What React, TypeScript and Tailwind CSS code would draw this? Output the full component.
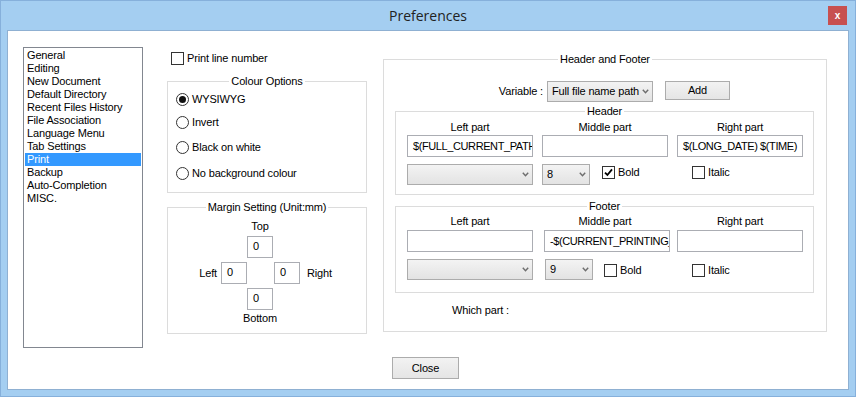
import React from "react";

function Chevron() {
  return (
    <svg width="7" height="5" viewBox="0 0 7 5" className="shrink-0">
      <path d="M0.8 0.8 L3.5 3.8 L6.2 0.8" fill="none" stroke="#6d6d6d" strokeWidth="1.4" />
    </svg>
  );
}

function Select({ className, text }: { className: string; text?: string }) {
  return (
    <div
      className={
        "flex items-center justify-between border border-[#acacac] bg-linear-to-b from-[#f3f3f3] to-[#e3e3e3] pl-[4px] pr-[3px] " +
        className
      }
    >
      <span className="whitespace-nowrap leading-[13px]">{text}</span>
      <Chevron />
    </div>
  );
}

function Check({ checked }: { checked?: boolean }) {
  return (
    <div className="w-[13px] h-[13px] border border-[#333333] bg-white flex items-center justify-center shrink-0">
      {checked && (
        <svg width="9" height="9" viewBox="0 0 9 9">
          <path d="M1 4.6 L3.4 7 L8 1.4" fill="none" stroke="#000" strokeWidth="1.8" />
        </svg>
      )}
    </div>
  );
}

function Radio({ checked }: { checked?: boolean }) {
  return (
    <div className="w-[13px] h-[13px] rounded-full border border-[#333333] bg-white flex items-center justify-center shrink-0">
      {checked && <div className="w-[7px] h-[7px] rounded-full bg-[#111]" />}
    </div>
  );
}

function Input({ className, text }: { className: string; text?: string }) {
  return (
    <div
      className={
        "border border-[#abadb3] bg-white overflow-hidden whitespace-nowrap pl-[5px] tracking-[-0.4px] " +
        className
      }
    >
      {text}
    </div>
  );
}

const items = [
  "General",
  "Editing",
  "New Document",
  "Default Directory",
  "Recent Files History",
  "File Association",
  "Language Menu",
  "Tab Settings",
  "Print",
  "Backup",
  "Auto-Completion",
  "MISC.",
];

export default function App() {
  return (
    <div className="w-[856px] h-[397px] bg-[#a4cef1] border border-[#86b0db] flex flex-col font-['Liberation_Sans',Arial,sans-serif] text-[11px] text-black tracking-[-0.15px]">
      {/* Title bar */}
      <div className="h-[29px] grid grid-cols-[1fr_auto_1fr] shrink-0">
        <div />
        <div className="font-['Open_Sans',sans-serif] text-[14px] leading-[29px] text-[#222] tracking-normal">
          Preferences
        </div>
        <div className="flex justify-end items-start">
          <div className="mt-[5px] mr-[8px] w-[19px] h-[19px] bg-[#c75050] flex items-center justify-center text-white font-bold text-[10px] leading-none">
            x
          </div>
        </div>
      </div>

      {/* Content */}
      <div className="mx-[6px] h-[360px] border border-[#8fb0d2] bg-white flex flex-col shrink-0">
        <div className="flex items-start pl-[15px] pt-[16px]">
          {/* Listbox */}
          <div className="w-[120px] h-[301px] border border-[#828790] p-[1px] shrink-0">
            {items.map((it) => (
              <div
                key={it}
                className={
                  it === "Print"
                    ? "h-[13px] leading-[13px] pl-[2px] bg-[#3399ff] text-white whitespace-nowrap"
                    : "h-[13px] leading-[13px] pl-[2px] whitespace-nowrap"
                }
              >
                {it}
              </div>
            ))}
          </div>

          {/* Middle column */}
          <div className="ml-[24px] w-[200px] flex flex-col shrink-0">
            <div className="mt-[5px] h-[13px] flex items-center gap-[3px] pl-[4px]">
              <Check />
              <span className="leading-[13px]">Print line number</span>
            </div>

            <fieldset className="mt-[10px] h-[118px] border border-[#dcdcdc]">
              <legend className="mx-auto px-[2px] leading-[13px]">Colour Options</legend>
              <div className="flex flex-col pl-[8px]">
                <div className="mt-[3px] h-[16px] flex items-center gap-[3px]">
                  <Radio checked />
                  <span>WYSIWYG</span>
                </div>
                <div className="mt-[7px] h-[16px] flex items-center gap-[3px]">
                  <Radio />
                  <span>Invert</span>
                </div>
                <div className="mt-[9px] h-[16px] flex items-center gap-[3px]">
                  <Radio />
                  <span>Black on white</span>
                </div>
                <div className="mt-[10px] h-[16px] flex items-center gap-[3px]">
                  <Radio />
                  <span>No background colour</span>
                </div>
              </div>
            </fieldset>

            <fieldset className="mt-[8px] h-[133px] border border-[#dcdcdc]">
              <legend className="mx-auto px-[2px] leading-[13px]">Margin Setting (Unit:mm)</legend>
              <div className="mt-[6px] grid grid-cols-[53px_26px_26px_26px_auto] grid-rows-[12px_22px_22px_22px_12px] gap-y-[4px]">
                <div className="col-start-3 row-start-1 flex justify-center whitespace-nowrap leading-[12px]">
                  Top
                </div>
                <Input className="col-start-3 row-start-2 w-[26px] h-[22px] leading-[18px]" text="0" />
                <div className="col-start-1 row-start-3 text-right pr-[4px] leading-[22px]">Left</div>
                <Input className="col-start-2 row-start-3 w-[26px] h-[22px] leading-[18px]" text="0" />
                <Input className="col-start-4 row-start-3 ml-[1px] w-[26px] h-[22px] leading-[18px]" text="0" />
                <div className="col-start-5 row-start-3 pl-[8px] leading-[22px]">Right</div>
                <Input className="col-start-3 row-start-4 w-[26px] h-[22px] leading-[18px]" text="0" />
                <div className="col-start-3 row-start-5 -mt-[2px] flex justify-center whitespace-nowrap leading-[12px]">
                  Bottom
                </div>
              </div>
            </fieldset>
          </div>

          {/* Header and Footer */}
          <fieldset className="ml-[16px] mt-[6px] w-[444px] h-[279px] border border-[#dcdcdc] shrink-0">
            <legend className="mx-auto px-[2px] leading-[13px]">Header and Footer</legend>
            <div className="mt-[15px] pl-[100px] flex items-start">
              <span className="w-[59px] text-right leading-[20px] whitespace-nowrap">Variable :</span>
              <Select className="ml-[4px] w-[106px] h-[21px]" text="Full file name path" />
              <div className="ml-[12px] w-[65px] h-[19px] border border-[#acacac] bg-linear-to-b from-[#f2f2f2] to-[#e5e5e5] flex items-center justify-center">
                Add
              </div>
            </div>

            <fieldset className="ml-[11px] mt-[3px] w-[419px] h-[90px] border border-[#dcdcdc]">
              <legend className="mx-auto px-[2px] leading-[13px]">Header</legend>
              <div className="grid grid-cols-[126px_126px_126px] gap-x-[9px] pl-[11px] pt-[3px]">
                <div className="text-center leading-[13px]">Left part</div>
                <div className="text-center leading-[13px]">Middle part</div>
                <div className="text-center leading-[13px]">Right part</div>
              </div>
              <div className="grid grid-cols-[126px_126px_126px] gap-x-[9px] pl-[11px] mt-[1px]">
                <Input className="h-[22px] leading-[20px]" text="$(FULL_CURRENT_PATH)" />
                <Input className="h-[22px] leading-[20px]" />
                <Input className="h-[22px] leading-[20px]" text="$(LONG_DATE) $(TIME)" />
              </div>
              <div className="flex items-start pl-[11px] mt-[7px]">
                <Select className="w-[126px] h-[21px]" />
                <Select className="ml-[9px] w-[48px] h-[21px]" text="8" />
                <div className="ml-[12px] mt-[2px] w-[90px] flex items-center gap-[3px]">
                  <Check checked />
                  <span className="leading-[13px]">Bold</span>
                </div>
                <div className="mt-[2px] flex items-center gap-[3px]">
                  <Check />
                  <span className="leading-[13px]">Italic</span>
                </div>
              </div>
            </fieldset>

            <fieldset className="ml-[11px] mt-[5px] w-[419px] h-[93px] border border-[#dcdcdc]">
              <legend className="mx-auto px-[2px] leading-[13px]">Footer</legend>
              <div className="grid grid-cols-[126px_126px_126px] gap-x-[9px] pl-[11px] pt-[2px]">
                <div className="text-center leading-[13px]">Left part</div>
                <div className="text-center leading-[13px]">Middle part</div>
                <div className="text-center leading-[13px]">Right part</div>
              </div>
              <div className="grid grid-cols-[126px_126px_126px] gap-x-[9px] pl-[11px] mt-[2px]">
                <Input className="h-[22px] leading-[20px]" />
                <Input className="ml-[2px] w-[126px] h-[22px] leading-[20px]" text="-$(CURRENT_PRINTING_PAGE)-" />
                <Input className="h-[22px] leading-[20px]" />
              </div>
              <div className="flex items-start pl-[11px] mt-[7px]">
                <Select className="w-[126px] h-[21px]" />
                <Select className="ml-[12px] w-[48px] h-[21px]" text="9" />
                <div className="ml-[11px] mt-[5px] w-[88px] flex items-center gap-[3px]">
                  <Check />
                  <span className="leading-[13px]">Bold</span>
                </div>
                <div className="mt-[5px] flex items-center gap-[3px]">
                  <Check />
                  <span className="leading-[13px]">Italic</span>
                </div>
              </div>
            </fieldset>

            <div className="mt-[11px] pl-[68px] leading-[13px]">Which part :</div>
          </fieldset>
        </div>

        <div className="ml-[384px] mt-[9px] w-[67px] h-[22px] border border-[#acacac] bg-linear-to-b from-[#f2f2f2] to-[#e5e5e5] flex items-center justify-center">
          Close
        </div>
      </div>
    </div>
  );
}
